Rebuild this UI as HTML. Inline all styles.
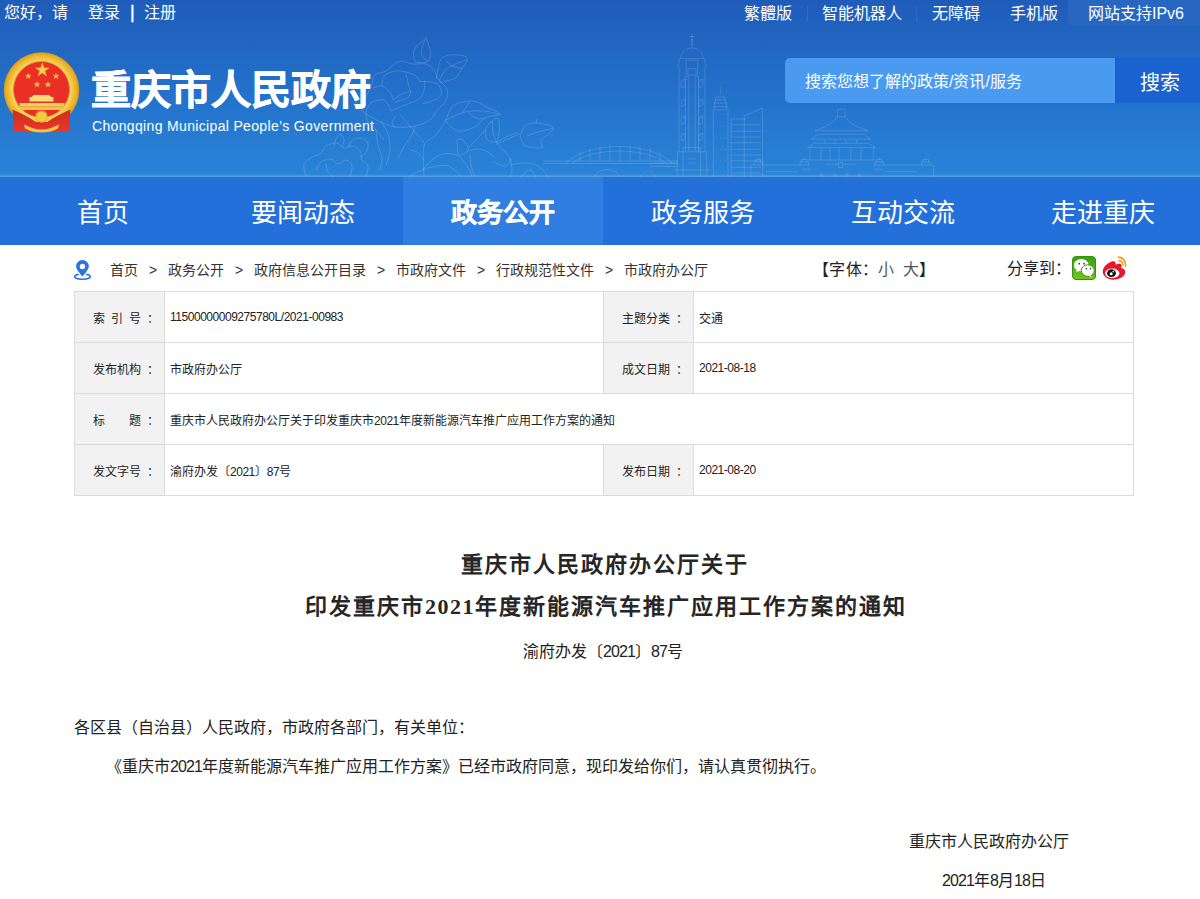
<!DOCTYPE html>
<html lang="zh-CN">
<head>
<meta charset="utf-8">
<title>重庆市人民政府</title>
<style>
*{margin:0;padding:0;box-sizing:border-box}
html,body{width:1200px;height:899px;overflow:hidden;background:#fff}
body{position:relative;font-family:"Liberation Sans",sans-serif;color:#333}
.abs{position:absolute;white-space:nowrap}
#hdr{position:absolute;left:0;top:0;width:1200px;height:177px;background:linear-gradient(180deg,#1f5cb9 0%,#2372cb 55%,#2a84d7 100%)}
#hdr .hl{position:absolute;left:0;bottom:0;width:1200px;height:3px;background:linear-gradient(180deg,rgba(255,255,255,0),rgba(255,255,255,.25))}
.tl{color:#fff;font-size:16px;line-height:26px;top:1px}
#ipv6{position:absolute;left:1068px;top:0;width:132px;height:26px;background:#2767c2;border-bottom-left-radius:5px}
.sep{position:absolute;top:6px;width:1px;height:16px;background:rgba(255,255,255,.08)}
#title{left:91px;top:64px;-webkit-text-stroke:0.8px #fff;font-size:40px;line-height:52px;font-weight:bold;color:#fff}
#en{left:92px;top:117px;font-size:14px;line-height:18px;color:#fff;letter-spacing:0.34px}
#sbox{position:absolute;left:785px;top:58px;width:330px;height:45px;background:#4a9bef;border-radius:5px 0 0 5px}
#sbtn{position:absolute;left:1115px;top:58px;width:85px;height:45px;background:#1a62cf}
#nav{position:absolute;left:0;top:177px;width:1200px;height:68px;background:#2470da}
#nav .it{position:absolute;top:0;width:200px;height:68px;line-height:72px;text-align:center;color:#fff;font-size:26px}
#nav .on{background:#317ee2;font-weight:bold;-webkit-text-stroke:0.4px #fff}
.bc{top:261px;font-size:14px;line-height:18px;color:#333}
table.info{position:absolute;left:74px;top:291px;width:1060px;border-collapse:collapse;font-size:12px;color:#222}
table.info td{border:1px solid #dcdcdc;height:51px;padding:0}
table.info td.lb{background:#f2f2f2;width:90px;padding-left:18px}
table.info td.vl{padding-left:5px}
.n{letter-spacing:-0.47px}
.d{letter-spacing:-0.9px}
.h1{font-size:22px;letter-spacing:2px;font-weight:bold;color:#262626;line-height:30px;font-family:"Liberation Serif",serif}
.p{font-size:16px;color:#222;line-height:20px}
</style>
</head>
<body>
<div id="hdr"><div class="hl"></div></div>


<!-- header line art -->
<svg style="position:absolute;left:0;top:0" width="1200" height="177" viewBox="0 0 1200 177">
<g fill="none" stroke="#ffffff" stroke-opacity="0.2" stroke-width="0.8" stroke-linejoin="round">
<!-- flowers -->
<path d="M425.9 37.6 C424.0 39.5 416.8 45.7 414.8 48.7 C412.8 51.7 413.4 53.5 413.7 55.7 C414.0 57.9 414.3 61.1 416.6 62.1 C418.9 63.1 425.4 63.1 427.7 61.5 C430.0 59.9 430.9 56.2 430.6 52.2 C430.3 48.2 426.7 40.0 425.9 37.6"/>
<path d="M424.8 39.3 C424.2 41.6 420.8 49.7 421.3 53.4 C421.8 57.1 426.6 60.1 427.7 61.5"/>
<path d="M362.0 110.0 C359.7 105.5 365.5 98.8 367.0 95.0 C368.5 91.2 369.7 90.3 371.0 87.0 C372.3 83.7 372.5 77.7 375.0 75.0 C377.5 72.3 382.0 73.2 386.0 71.0 C390.0 68.8 394.5 62.7 399.0 61.5 C403.5 60.3 408.5 63.6 413.0 64.0 C417.5 64.4 422.5 63.0 426.0 64.0 C429.5 65.0 432.0 67.5 434.0 70.0 C436.0 72.5 435.8 75.8 438.0 79.0 C440.2 82.2 445.7 85.3 447.0 89.0 C448.3 92.7 447.7 97.5 446.0 101.0 C444.3 104.5 439.7 106.8 437.0 110.0 C434.3 113.2 433.7 117.3 430.0 120.0 C426.3 122.7 420.7 124.8 415.0 126.0 C409.3 127.2 401.7 127.7 396.0 127.0 C390.3 126.3 386.7 124.8 381.0 122.0 C375.3 119.2 364.3 114.5 362.0 110.0 Z"/>
<path d="M382.0 86.0 C382.3 84.3 381.8 78.5 384.0 76.0 C386.2 73.5 391.3 71.7 395.0 71.0 C398.7 70.3 402.5 71.2 406.0 72.0 C409.5 72.8 413.7 74.3 416.0 76.0 C418.3 77.7 419.3 81.0 420.0 82.0"/>
<path d="M393.2 100.0 C394.7 99.0 399.1 95.3 402.0 94.0 C404.9 92.7 409.9 91.3 410.7 91.9 C411.5 92.5 409.6 96.1 407.0 97.8 C404.4 99.5 397.0 101.3 395.0 102.0"/>
<path d="M391.0 110.6 C393.3 109.7 400.3 107.0 405.0 105.0 C409.7 103.0 415.8 101.4 419.0 98.9 C422.2 96.4 423.0 93.1 424.0 90.0 C425.0 86.9 424.7 81.8 424.8 80.2"/>
<path d="M406.0 73.0 C406.3 74.7 407.2 79.8 408.0 83.0 C408.8 86.2 410.2 90.5 410.7 92.0"/>
<path d="M420.0 81.4 C421.7 81.5 426.9 81.4 430.0 82.0 C433.1 82.6 437.0 82.8 438.8 85.0 C440.6 87.2 442.1 92.7 441.0 95.4 C439.9 98.1 435.1 99.6 432.0 101.0 C428.9 102.4 424.0 103.2 422.4 103.6"/>
<path d="M371.0 102.4 C373.1 102.0 380.6 98.6 383.9 100.0 C387.2 101.4 389.8 108.8 391.0 110.6"/>
<path d="M373.0 88.0 C374.5 87.7 379.2 85.3 382.0 86.0 C384.8 86.7 388.2 89.7 390.0 92.0 C391.8 94.3 392.5 98.7 393.0 100.0"/>
<path d="M395.6 116.4 C395.0 117.3 392.0 120.1 392.0 122.0 C392.0 123.9 395.0 127.0 395.6 128.0"/>
<path d="M415.0 126.0 C414.5 127.5 413.7 131.8 412.0 135.0 C410.3 138.2 407.3 141.2 405.0 145.0 C402.7 148.8 399.2 155.8 398.0 158.0"/>
<path d="M436.4 79.0 C437.3 75.5 438.1 62.0 442.0 58.0 C445.9 54.0 455.6 54.9 459.8 55.1 C464.0 55.3 467.0 57.0 467.4 59.2 C467.8 61.4 464.1 65.4 462.0 68.5 C459.9 71.6 458.7 75.7 455.0 78.0 C451.3 80.3 442.5 81.8 440.0 82.6"/>
<path d="M438.8 81.4 C440.2 79.2 442.3 72.1 447.0 68.5 C451.7 64.9 463.5 61.2 466.8 59.8"/>
<path d="M446.0 61.0 C447.0 61.8 449.3 64.8 452.0 66.0 C454.7 67.2 460.3 68.1 462.0 68.5"/>
<path d="M445.3 121.7 C446.6 119.0 448.9 109.2 453.3 105.7 C457.8 102.2 466.4 100.8 472.0 101.0 C477.6 101.2 482.0 104.8 486.7 107.0 C491.4 109.2 500.2 112.5 500.0 114.3 C499.8 116.1 489.5 115.6 485.3 117.7 C481.1 119.8 479.1 124.8 474.7 127.0 C470.3 129.2 463.6 131.9 458.7 131.0 C453.8 130.1 447.5 123.2 445.3 121.7"/>
<path d="M445.3 120.3 C448.4 119.0 457.8 113.8 464.0 112.3 C470.2 110.8 476.7 110.7 482.7 111.0 C488.7 111.3 497.1 113.8 500.0 114.3"/>
<path d="M462.7 112.3 C463.8 110.5 468.2 103.5 469.3 101.7"/>
<path d="M468.0 112.0 C469.3 113.0 473.1 116.8 476.0 118.0 C478.9 119.2 483.8 118.8 485.3 119.0"/>
<path d="M424.0 177.0 C424.0 171.8 422.2 152.5 424.0 145.7 C425.8 138.9 431.1 140.3 434.7 136.3 C438.2 132.3 443.5 124.1 445.3 121.7"/>
<path d="M424.0 143.0 C422.0 140.6 416.0 133.0 412.0 128.3 C408.0 123.6 402.0 117.2 400.0 115.0"/>
<path d="M410.7 150.3 C411.8 150.6 415.1 150.7 417.3 152.3 C419.5 153.9 422.9 158.7 424.0 160.0"/>
<path d="M520.0 136.3 C520.9 134.5 522.4 127.9 525.3 125.7 C528.2 123.5 532.6 122.6 537.3 123.0 C542.0 123.4 552.6 125.4 553.3 128.3 C554.0 131.2 543.2 137.1 541.3 140.3 C539.4 143.5 544.7 146.8 542.0 147.7 C539.3 148.6 529.0 147.6 525.3 145.7 C521.6 143.8 520.9 137.9 520.0 136.3"/>
<path d="M496.0 144.3 C498.0 143.4 504.0 140.8 508.0 139.0 C512.0 137.2 518.0 134.6 520.0 133.7"/>
<path d="M496.0 142.3 C497.7 141.4 502.4 138.7 506.0 137.0 C509.6 135.3 515.4 133.1 517.3 132.3"/>
<path d="M537.3 119.0 C537.1 119.7 536.2 122.3 536.0 123.0"/>
<path d="M527.0 136.0 C528.8 135.3 533.7 133.3 538.0 132.0 C542.3 130.7 550.5 128.9 553.0 128.3"/>
<path d="M457.3 140.3 C458.0 139.2 459.7 138.3 461.3 139.0 C462.9 139.7 465.6 142.3 466.7 144.3 C467.8 146.3 469.3 149.2 468.0 151.0 C466.7 152.8 460.5 155.9 458.7 155.0 C456.9 154.1 457.5 148.1 457.3 145.7 C457.1 143.2 456.6 141.4 457.3 140.3 Z"/>
<path d="M486.7 127.0 C488.5 123.5 495.2 117.8 497.3 118.3 C499.4 118.8 499.5 125.8 499.3 129.7 C499.1 133.6 498.1 140.1 496.0 141.7 C493.9 143.2 488.2 141.4 486.7 139.0 C485.1 136.6 484.9 130.4 486.7 127.0 Z"/>
<path d="M492.0 121.0 C492.2 122.8 492.3 128.6 493.0 132.0 C493.7 135.4 495.5 140.1 496.0 141.7"/>
<path d="M469.3 147.0 C470.8 145.5 475.3 140.9 478.0 138.0 C480.7 135.1 484.1 131.1 485.3 129.7"/>
<path d="M496.0 141.7 C497.3 143.2 501.6 148.1 504.0 151.0 C506.4 153.9 510.7 156.5 510.7 159.0 C510.7 161.5 506.9 165.6 504.0 166.0 C501.1 166.4 495.1 162.4 493.3 161.7"/>
<path d="M469.0 151.0 C470.5 150.7 474.8 148.8 478.0 149.0 C481.2 149.2 485.2 150.5 488.0 152.0 C490.8 153.5 493.8 157.0 495.0 158.0"/>
<path d="M470.0 155.0 C470.2 156.7 470.2 161.3 471.0 165.0 C471.8 168.7 474.3 175.0 475.0 177.0"/>
<path d="M510.7 159.0 C510.9 160.8 512.1 167.0 512.0 170.0 C511.9 173.0 510.3 175.8 510.0 177.0"/>
<path d="M422.7 169.7 C424.2 168.1 428.4 162.7 432.0 160.0 C435.6 157.3 439.6 154.3 444.0 153.7 C448.4 153.1 454.5 153.6 458.7 156.3 C462.9 159.0 467.1 166.2 469.3 169.7 C471.5 173.1 471.6 175.8 472.0 177.0"/>
<path d="M408.0 177.0 C410.0 176.0 416.0 172.7 420.0 171.0 C424.0 169.3 427.3 167.8 432.0 167.0 C436.7 166.2 443.0 164.3 448.0 166.0 C453.0 167.7 459.7 175.2 462.0 177.0"/>
<path d="M510.7 164.3 C513.6 164.1 523.1 162.6 528.0 163.0 C532.9 163.4 536.7 164.7 540.0 167.0 C543.3 169.3 546.7 175.3 548.0 177.0"/>
<path d="M520.0 177.0 C521.7 175.8 527.3 170.0 530.0 170.0 C532.7 170.0 535.0 175.8 536.0 177.0"/>
<path d="M306.0 176.0 C305.7 174.2 303.0 168.2 304.0 165.0 C305.0 161.8 309.3 158.8 312.0 157.0 C314.7 155.2 317.7 155.8 320.0 154.0 C322.3 152.2 323.2 147.8 326.0 146.0 C328.8 144.2 334.0 142.7 337.0 143.0 C340.0 143.3 341.5 147.5 344.0 148.0 C346.5 148.5 349.3 145.5 352.0 146.0 C354.7 146.5 358.3 148.7 360.0 151.0 C361.7 153.3 360.7 157.5 362.0 160.0 C363.3 162.5 367.3 163.2 368.0 166.0 C368.7 168.8 366.3 175.2 366.0 177.0"/>
<path d="M316.0 170.0 C316.8 168.7 318.5 163.8 321.0 162.0 C323.5 160.2 328.2 158.7 331.0 159.0 C333.8 159.3 335.5 163.8 338.0 164.0 C340.5 164.2 343.7 159.7 346.0 160.0 C348.3 160.3 351.3 163.2 352.0 166.0 C352.7 168.8 350.3 175.2 350.0 177.0"/>
<path d="M334.0 146.0 C334.3 144.8 334.8 141.0 336.0 139.0 C337.2 137.0 339.7 133.8 341.0 134.0 C342.3 134.2 343.8 137.8 344.0 140.0 C344.2 142.2 342.3 145.8 342.0 147.0"/>
<path d="M348.0 147.0 C348.8 145.8 350.8 141.5 353.0 140.0 C355.2 138.5 358.5 137.5 361.0 138.0 C363.5 138.5 367.2 140.7 368.0 143.0 C368.8 145.3 367.3 149.7 366.0 152.0 C364.7 154.3 361.0 156.2 360.0 157.0"/>
<path d="M326.0 164.0 C326.3 165.3 326.7 169.8 328.0 172.0 C329.3 174.2 333.0 176.2 334.0 177.0"/>
<path d="M371.0 102.4 C370.2 104.0 366.5 108.7 366.0 112.0 C365.5 115.3 366.3 119.0 368.0 122.0 C369.7 125.0 373.3 127.0 376.0 130.0 C378.7 133.0 382.7 138.3 384.0 140.0"/>
<path d="M381.0 122.0 C382.2 124.0 386.5 129.3 388.0 134.0 C389.5 138.7 390.3 144.8 390.0 150.0 C389.7 155.2 386.7 162.5 386.0 165.0"/>
<path d="M376.0 130.0 C376.3 132.5 377.0 140.3 378.0 145.0 C379.0 149.7 381.7 153.8 382.0 158.0 C382.3 162.2 380.3 168.0 380.0 170.0"/>
</g>
<g fill="none" stroke="#ffffff" stroke-opacity="0.2" stroke-width="0.7">
<!-- bridge -->
<path d="M543 163.5 L678 163.5 M543 161 L678 161"/>
<path d="M566 163 C588 141 650 141 672 163"/>
<path d="M572 163 C594 147 644 147 666 163"/>
<path d="M580 152 L580 161 M590 148 L590 161 M600 146 L600 161 M610 145 L610 161 M620 145 L620 161 M630 145 L630 161 M640 146 L640 161 M650 148 L650 161 M660 152 L660 161"/>
<path d="M594 177 C598 168 614 166 620 177"/>
<path d="M640 177 C644 170 652 170 656 177"/>
<!-- tall tower -->
<path d="M692 33 L692 48 M689 36.5 L695 36.5 M689.5 41 C692 38 694 40 692 42 C690 44 692 46 694.5 44"/>
<path d="M680.5 58.6 C681 52 686 48 692 48 C698 48 703 52 703.4 58.6 Z"/>
<path d="M679 58.6 L679 64 C677.5 65.5 677.5 67 679 67.6 L679 151.8 M705 58.6 L705 64 C706.5 65.5 706.5 67 705 67.6 L705 151.8"/>
<path d="M686.2 60.2 L697.7 60.2 L697.7 76.6 M686.2 60.2 L686.2 76.6"/>
<path d="M687.9 68.4 L696 68.4 L696 75 L687.9 75 Z"/>
<path d="M685.4 76.6 L685.4 151 M688.7 76.6 L688.7 151 M695.2 76.6 L695.2 151 M698.5 76.6 L698.5 151 M685.4 76.6 L688.7 76.6 M695.2 76.6 L698.5 76.6"/>
<path d="M681.3 81 L685 79 L685 86 L681.3 88 Z M681.3 100.6 L685 98.6 L685 104.8 L681.3 106.8 Z M681.3 117.8 L685 115.8 L685 122.8 L681.3 124.8 Z M681.3 135 L685 133 L685 139 L681.3 141 Z"/>
<path d="M702.7 79 L699 81 L699 88 L702.7 86 Z M702.7 98.6 L699 100.6 L699 106.8 L702.7 104.8 Z M702.7 115.8 L699 117.8 L699 124.8 L702.7 122.8 Z M702.7 133 L699 135 L699 141 L702.7 139 Z"/>
<path d="M683 151.8 L683 147.7 L700.5 147.7 L700.5 151.8 M677.3 177 L677.3 151.8 L706.7 151.8 L706.7 177 M683 151.8 L683 177 M700.5 151.8 L700.5 177 M688 159 L696 159 M688 163 L696 163 M674 170 L710 170"/>
<path d="M650 163 L677 163 M650 166.5 L677 166.5"/>
<!-- second tower -->
<path d="M720.6 87.2 L720.6 94.6 M716 97 L725 97 M715 100 L726 100 M714.5 103 L726.5 103 M714 106.8 L727 106.8 L727 110 L714 110 Z M716 97 L714 106.8 M725 97 L727 106.8"/>
<path d="M713.2 110 L713.2 177 M728 110 L728 177"/>
<path d="M715.5 114 L716 114 M720.3 114 L720.9 114 M725.2 114 L725.8 114 M715.5 126.4 L716 126.4 M720.3 126.4 L720.9 126.4 M725.2 126.4 L725.8 126.4 M715.5 137.9 L716 137.9 M720.3 137.9 L720.9 137.9 M725.2 137.9 L725.8 137.9 M715.5 149.3 L716 149.3 M720.3 149.3 L720.9 149.3 M725.2 149.3 L725.8 149.3 M715.5 160.8 L716 160.8 M720.3 160.8 L720.9 160.8 M725.2 160.8 L725.8 160.8 M715.5 172.2 L716 172.2 M720.3 172.2 L720.9 172.2 M725.2 172.2 L725.8 172.2" stroke-width="1.2"/>
<!-- third building -->
<path d="M731.2 177 L731.2 119 L745.9 119 M744.3 177 L744.3 115.8 L762.7 108 L762.7 177"/>
<path d="M731.2 124.8 L761 124.8 M731.2 131.3 L761 131.3 M731.2 137 L761 137 M731.2 142.8 L761 142.8 M731.2 149.3 L761 149.3 M731.2 155 L761 155 M731.2 160.8 L761 160.8 M731.2 167.3 L761 167.3 M731.2 173 L761 173"/>
<!-- hall -->
<path d="M837.5 110 Q837.5 109.2 838.3 109.2 L844.2 109.2 Q845 109.2 845 110 L845 116.7 L837.5 116.7 Z"/>
<path d="M815 130.8 C826 127 834 122 837.5 116.7 M845 116.7 C848 122 856 127 867.5 130.8"/>
<path d="M815 130.8 L868.3 130.8 M818 134.2 L864 134.2 M818 134.2 L811.7 139.2 M864 134.2 L870.8 139.2 M811.7 139.2 L870.8 139.2"/>
<path d="M825 139.2 L825 143.3 M835 139.2 L835 143.3 M845.8 139.2 L845.8 143.3 M856.7 139.2 L856.7 143.3 M814 143.3 L868 143.3 M814 143.3 L807.5 147.5 M868 143.3 L875.8 147.5 M807.5 147.5 L875.8 147.5"/>
<path d="M810 147.5 L810 160 M820.8 147.5 L820.8 160 M830 147.5 L830 160 M839 147.5 L839 160 M850.8 147.5 L850.8 160 M860.8 147.5 L860.8 160 M873.3 147.5 L873.3 160 M808 160 L875 160"/>
<path d="M838.3 162.5 L842.5 162.5 L842.5 167.5 L838.3 167.5 Z M825 164.2 L837.5 164.2 M843.3 164.2 L856 164.2"/>
<path d="M750.8 165 L810.8 165 M873.3 165 L933.3 165 M750.8 165 L750.8 177 M933.3 165 L933.3 177"/>
<path d="M801 169.2 L811 169.2 M873 169.2 L883 169.2 M766 171.7 L798 171.7 M885 171.7 L917 171.7"/>
<path d="M754 165 L754 162 L762.5 162 L762.5 165 M755.5 162 L755.5 159.5 L761 159.5 L761 162 M758.3 159.5 L758.3 157"/>
<path d="M800 165 L800 162 L808.5 162 L808.5 165 M801.5 162 L801.5 159.5 L807 159.5 L807 162 M804.2 159.5 L804.2 157"/>
<path d="M875 165 L875 162 L883.5 162 L883.5 165 M876.5 162 L876.5 159.5 L882 159.5 L882 162 M879.2 159.5 L879.2 157"/>
<path d="M921.5 165 L921.5 162 L930 162 L930 165 M923 162 L923 159.5 L928.5 159.5 L928.5 162 M925.8 159.5 L925.8 157"/>
<path d="M820.5 177 L820.5 174 L823 174 L823 177 M833.8 177 L833.8 174 L836.3 174 L836.3 177 M845.5 177 L845.5 174 L848 174 L848 177 M858 177 L858 174 L860.5 174 L860.5 177"/>
</g>
</svg>

<!-- top bar -->
<div id="ipv6"></div>
<div class="abs tl" style="left:4px;top:0">您好，请</div>
<div class="abs tl" style="left:88px;top:0">登录</div>
<div class="abs tl" style="left:130px;font-size:18px;top:-1px;-webkit-text-stroke:0.4px #fff">|</div>
<div class="abs tl" style="left:144px;top:0">注册</div>
<div class="sep" style="left:807px"></div>
<div class="sep" style="left:916px"></div>
<div class="abs tl" style="left:744px">繁體版</div>
<div class="abs tl" style="left:822px">智能机器人</div>
<div class="abs tl" style="left:932px">无障碍</div>
<div class="abs tl" style="left:1010px">手机版</div>
<div class="abs tl" style="left:1088px">网站支持IPv6</div>


<!-- emblem -->
<svg style="position:absolute;left:0;top:45px" width="90" height="95" viewBox="0 45 90 95">
<defs>
<radialGradient id="gold" cx="50%" cy="50%" r="50%">
<stop offset="0.72" stop-color="#fbe07a"/><stop offset="0.85" stop-color="#f2c43a"/><stop offset="1" stop-color="#e0a321"/>
</radialGradient>
<linearGradient id="rib" x1="0" y1="0" x2="0" y2="1"><stop offset="0" stop-color="#d42a1e"/><stop offset="1" stop-color="#e8382c"/></linearGradient>
</defs>
<circle cx="41.5" cy="90" r="37.3" fill="url(#gold)" stroke="#d99a1e" stroke-width="0.9"/>
<circle cx="41.5" cy="89.5" r="28" fill="#ea2f27" stroke="#cf9322" stroke-width="0.9"/>
<g fill="#f3cd47" stroke="#d9a52a" stroke-width="0.3">
<polygon points="42.3,62.6 44.1,67.8 49.4,67.8 45.1,71 46.7,76.2 42.3,73 37.9,76.2 39.5,71 35.2,67.8 40.5,67.8"/>
<polygon points="28.3,73 29.1,75.2 31.4,75.2 29.6,76.6 30.3,78.8 28.3,77.4 26.3,78.8 27,76.6 25.2,75.2 27.5,75.2"/>
<polygon points="56,73 56.8,75.2 59.1,75.2 57.3,76.6 58,78.8 56,77.4 54,78.8 54.7,76.6 52.9,75.2 55.2,75.2"/>
<polygon points="37,81.4 37.8,83.6 40.1,83.6 38.3,85 39,87.2 37,85.8 35,87.2 35.7,85 33.9,83.6 36.2,83.6"/>
<polygon points="48,81.4 48.8,83.6 51.1,83.6 49.3,85 50,87.2 48,85.8 46,87.2 46.7,85 44.9,83.6 47.2,83.6"/>
</g>
<g fill="#f5d35a">
<path d="M34 95 L49 95 L51.5 97 L53.5 97 L53.5 101.5 L29.5 101.5 L29.5 97 L31.5 97 Z" fill="#f8dc7a"/>
<rect x="19.5" y="103" width="45" height="3.5"/>
<rect x="19.5" y="106.5" width="45" height="3.5" fill="#f0c444"/>
</g>
<path d="M12.5 110 C21 113.5 29 117.5 35 122 L48 122 C54 117.5 62 113.5 70.5 110 C69.5 117 69.5 124 70 131.5 C64 131 58 131.5 52 132.5 L41.5 131 L31 132.5 C25 131.5 19 131 13 131.5 C13.5 124 13.5 117 12.5 110 Z" fill="url(#rib)"/>
<path d="M12.5 110 C21 113.5 29 117.5 35 122 M70.5 110 C62 113.5 54 117.5 48 122" fill="none" stroke="#b81d17" stroke-width="0.6"/>
<circle cx="41.5" cy="116.5" r="5.6" fill="#f3cb45" stroke="#e0a82a" stroke-width="1.6" stroke-dasharray="1 0.8"/>
<path d="M24 124.5 C30 127.5 36 129.5 41.5 129.5 C47 129.5 53 127.5 59 124.5 L58 128.5 C52 131.5 47 132.5 41.5 132.5 C36 132.5 31 131.5 25 128.5 Z" fill="#f2c640"/>
</svg>
<!-- title -->
<div class="abs" id="title">重庆市人民政府</div>
<div class="abs" id="en">Chongqing Municipal People’s Government</div>

<!-- search -->
<div id="sbox"></div>
<div id="sbtn"></div>
<div class="abs" style="left:805px;top:72px;font-size:16px;line-height:20px;color:#fff">搜索您想了解的政策/资讯/服务</div>
<div class="abs" style="left:1140px;top:71px;font-size:20px;line-height:24px;color:#fff">搜索</div>

<!-- nav -->
<div id="nav">
<div class="it" style="left:3px">首页</div>
<div class="it" style="left:203px">要闻动态</div>
<div class="it on" style="left:403px">政务公开</div>
<div class="it" style="left:603px">政务服务</div>
<div class="it" style="left:803px">互动交流</div>
<div class="it" style="left:1003px">走进重庆</div>
</div>

<!-- breadcrumb -->
<div class="abs bc" style="left:110px">首页</div>
<div class="abs bc" style="left:149px">&gt;</div>
<div class="abs bc" style="left:168px">政务公开</div>
<div class="abs bc" style="left:235px">&gt;</div>
<div class="abs bc" style="left:254px">政府信息公开目录</div>
<div class="abs bc" style="left:377px">&gt;</div>
<div class="abs bc" style="left:396px">市政府文件</div>
<div class="abs bc" style="left:477px">&gt;</div>
<div class="abs bc" style="left:496px">行政规范性文件</div>
<div class="abs bc" style="left:605px">&gt;</div>
<div class="abs bc" style="left:624px">市政府办公厅</div>
<div class="abs bc" style="left:813px;font-size:16px;top:261px;color:#222;letter-spacing:0.3px">【字体：<span style="color:#555">小&ensp;大</span>】</div>
<div class="abs bc" style="left:1007px;font-size:16px;top:260px;color:#222">分享到：</div>


<!-- location icon -->
<svg style="position:absolute;left:73px;top:259px" width="20" height="22" viewBox="0 0 20 22">
<ellipse cx="9.45" cy="17.6" rx="7.9" ry="2.6" fill="none" stroke="#2a6fdf" stroke-width="1.5"/>
<path d="M9.45 0.4 C5.3 0.4 2.4 3.5 2.4 7.3 C2.4 11 6.5 15.2 9.45 18.6 C12.4 15.2 16.5 11 16.5 7.3 C16.5 3.5 13.6 0.4 9.45 0.4 Z" fill="#2c72e0" stroke="#fff" stroke-width="1.3"/>
<circle cx="9.45" cy="7.56" r="2.7" fill="#fff"/>
</svg>
<!-- wechat -->
<svg style="position:absolute;left:1072px;top:256px" width="24" height="24" viewBox="0 0 24 24">
<defs><linearGradient id="wx" x1="0" y1="0" x2="0" y2="1"><stop offset="0" stop-color="#36a114"/><stop offset="1" stop-color="#74c41c"/></linearGradient></defs>
<rect x="0.5" y="0.5" width="23" height="23" rx="3.5" fill="url(#wx)" stroke="#2f9412" stroke-width="1"/>
<ellipse cx="9.3" cy="9.2" rx="7.3" ry="6.2" fill="#fff"/>
<path d="M4.8 13.5 L4.3 16.5 L8 14.6 Z" fill="#fff"/>
<ellipse cx="15.8" cy="14.6" rx="6.5" ry="5.8" fill="#fff" stroke="#2f9412" stroke-width="1"/>
<path d="M18.5 19 L20 21.5 L16.5 19.8 Z" fill="#fff"/>
<circle cx="7.3" cy="7.7" r="0.85" fill="#333"/><circle cx="12.1" cy="7.7" r="0.85" fill="#333"/>
<circle cx="14.4" cy="12.8" r="0.8" fill="#333"/><circle cx="18.4" cy="12.8" r="0.8" fill="#333"/>
</svg>
<!-- weibo -->
<svg style="position:absolute;left:1101px;top:254px" width="28" height="27" viewBox="0 0 28 27">
<path d="M11 7.5 C5.5 9 1.5 14 1.8 18.2 C2.2 23 8 26 13.8 25.6 C20.5 25.2 24.6 21.2 24.2 17.6 C23.9 15.3 21.8 14.3 20 14 C21 12 20.6 10.2 19.2 9.8 C17.8 9.4 15.6 10.2 14.6 10.8 C15.2 8.6 13.8 6.8 11 7.5 Z" fill="#e6162d"/>
<ellipse cx="11.2" cy="19.3" rx="7.2" ry="4.8" fill="#fff"/>
<ellipse cx="10.5" cy="19.2" rx="4.4" ry="3.9" fill="#111"/>
<circle cx="10.2" cy="19.8" r="1.5" fill="#fff"/>
<circle cx="12.3" cy="17.6" r="0.8" fill="#fff"/>
<path d="M17.6 3.2 C21.8 3.4 24.8 7 24.6 12" fill="none" stroke="#f0a010" stroke-width="1.8" stroke-linecap="round"/>
<path d="M18 6.6 C20.4 6.8 21.8 8.8 21.8 11" fill="none" stroke="#f0a010" stroke-width="1.6" stroke-linecap="round"/>
</svg>
<table class="info">
<tr><td class="lb">索&ensp;引&ensp;号&ensp;：</td><td class="vl" style="width:439px"><span class="n">11500000009275780L/2021-00983</span></td><td class="lb">主题分类&ensp;：</td><td class="vl">交通</td></tr>
<tr><td class="lb">发布机构&ensp;：</td><td class="vl">市政府办公厅</td><td class="lb">成文日期&ensp;：</td><td class="vl"><span class="n">2021-08-18</span></td></tr>
<tr><td class="lb">标&ensp;&ensp;&ensp;&ensp;题&ensp;：</td><td class="vl" colspan="3">重庆市人民政府办公厅关于印发重庆市<span class="n">2021</span>年度新能源汽车推广应用工作方案的通知</td></tr>
<tr><td class="lb">发文字号&ensp;：</td><td class="vl">渝府办发〔<span class="n">2021</span>〕<span class="n">87</span>号</td><td class="lb">发布日期&ensp;：</td><td class="vl"><span class="n">2021-08-20</span></td></tr>
</table>

<div class="abs h1" style="left:461px;top:550px">重庆市人民政府办公厅关于</div>
<div class="abs h1" style="left:305px;top:592px">印发重庆市<span style="letter-spacing:1.5px">2021</span>年度新能源汽车推广应用工作方案的通知</div>
<div class="abs p" style="left:523px;top:642px">渝府办发〔<span class="d">2021</span>〕<span class="d">87</span>号</div>
<div class="abs p" style="left:74px;top:718px">各区县（自治县）人民政府，市政府各部门，有关单位：</div>
<div class="abs p" style="left:106px;top:757px">《重庆市<span class="d">2021</span>年度新能源汽车推广应用工作方案》已经市政府同意，现印发给你们，请认真贯彻执行。</div>
<div class="abs p" style="left:909px;top:832px">重庆市人民政府办公厅</div>
<div class="abs p" style="left:942px;top:871px"><span class="d">2021</span>年<span class="d">8</span>月<span class="d">18</span>日</div>
</body>
</html>
